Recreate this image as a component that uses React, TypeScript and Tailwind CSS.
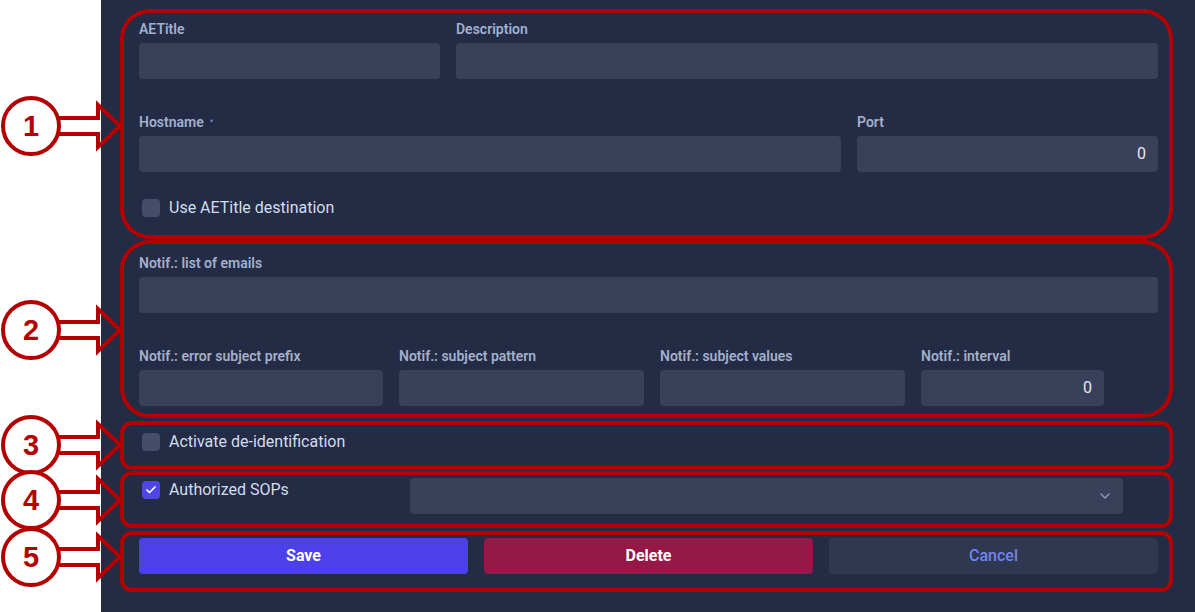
import React from "react";
import { ChevronDown, Check } from "lucide-react";

const RED = "#b40000";

function Label({ children, required }: { children: React.ReactNode; required?: boolean }) {
  return (
    <div className="h-5 mb-1 text-sm leading-5 font-semibold text-[#a3b0cb]">
      {children}
      {required && <span className="ml-1.5 text-[10px] align-top text-[#6f85ef]">•</span>}
    </div>
  );
}

function Input({ value, className = "" }: { value?: string; className?: string }) {
  return (
    <div
      className={`h-9 rounded bg-[#394059] flex items-center justify-end px-3 text-base text-[#e2e9f6] ${className}`}
    >
      {value}
    </div>
  );
}

function Checkbox({ checked, label }: { checked?: boolean; label: string }) {
  return (
    <div className="flex items-center h-[18px] gap-[9px] pl-[3px]">
      <div
        className={`w-[18px] h-[18px] rounded flex items-center justify-center ${
          checked ? "bg-[#4f46e5]" : "bg-[#454d69]"
        }`}
      >
        {checked && <Check size={12} strokeWidth={3.5} color="#fff" />}
      </div>
      <span className="text-base leading-[18px] text-[#d4ddec]">{label}</span>
    </div>
  );
}

const marks = [
  { n: "1", cy: 126 },
  { n: "2", cy: 330 },
  { n: "3", cy: 445 },
  { n: "4", cy: 500 },
  { n: "5", cy: 557 },
];

function Annotations() {
  return (
    <svg className="absolute inset-0 pointer-events-none" width="1195" height="612">
      <g fill="none" stroke={RED} strokeWidth="4">
        <rect x="122" y="11" width="1049" height="226" rx="28" />
        <rect x="122" y="242" width="1049" height="174" rx="28" />
        <rect x="122" y="423" width="1049" height="45" rx="10" />
        <rect x="122" y="473" width="1049" height="53" rx="10" />
        <rect x="122" y="533" width="1049" height="57" rx="10" />
      </g>
      {marks.map((m) => (
        <g key={m.n}>
          <path
            d={`M59 ${m.cy - 8} L98 ${m.cy - 8} L98 ${m.cy - 21} L120 ${m.cy} L98 ${m.cy + 21} L98 ${m.cy + 8} L59 ${m.cy + 8}`}
            fill="none"
            stroke={RED}
            strokeWidth="4"
          />
          <circle cx="31" cy={m.cy} r="28" fill="#fff" stroke={RED} strokeWidth="4" />
          <text
            x="31"
            y={m.cy + 10}
            textAnchor="middle"
            fill={RED}
            fontSize="29"
            fontWeight="bold"
            fontFamily="'Liberation Sans', Arial, sans-serif"
          >
            {m.n}
          </text>
        </g>
      ))}
    </svg>
  );
}

export default function App() {
  return (
    <div className="relative flex w-[1195px] h-[612px] overflow-hidden font-['Roboto',sans-serif]">
      <div className="w-[101px] bg-white" />
      <div className="flex-1 bg-[#232b45] pl-[38px] pr-[37px] pt-[19px]">
        <div className="grid grid-cols-[301px_1fr] gap-4">
          <div>
            <Label>AETitle</Label>
            <Input />
          </div>
          <div>
            <Label>Description</Label>
            <Input />
          </div>
        </div>

        <div className="grid grid-cols-[1fr_301px] gap-4 mt-[33px]">
          <div>
            <Label required>Hostname</Label>
            <Input />
          </div>
          <div>
            <Label>Port</Label>
            <Input value="0" />
          </div>
        </div>

        <div className="mt-[27px]">
          <Checkbox label="Use AETitle destination" />
        </div>

        <div className="mt-[36px]">
          <Label>Notif.: list of emails</Label>
          <Input />
        </div>

        <div className="grid grid-cols-[244px_245px_245px_1fr] gap-4 mt-[33px]">
          <div>
            <Label>Notif.: error subject prefix</Label>
            <Input />
          </div>
          <div>
            <Label>Notif.: subject pattern</Label>
            <Input />
          </div>
          <div>
            <Label>Notif.: subject values</Label>
            <Input />
          </div>
          <div>
            <Label>Notif.: interval</Label>
            <Input value="0" className="w-[183px]" />
          </div>
        </div>

        <div className="mt-[27px]">
          <Checkbox label="Activate de-identification" />
        </div>

        <div className="flex mt-[27px]">
          <div className="w-[271px] pt-[3px]">
            <Checkbox checked label="Authorized SOPs" />
          </div>
          <div className="w-[713px] h-9 rounded bg-[#394059] flex items-center justify-end pr-[10px]">
            <ChevronDown size={16} strokeWidth={2} color="#8d9ab8" />
          </div>
        </div>

        <div className="grid grid-cols-3 gap-4 mt-6">
          <button className="h-9 rounded bg-[#4c40ea] text-white text-base font-bold">Save</button>
          <button className="h-9 rounded bg-[#951846] text-white text-base font-bold">Delete</button>
          <button className="h-9 rounded bg-[#2f3751] text-[#6f85ef] text-base font-medium">Cancel</button>
        </div>
      </div>
      <Annotations />
    </div>
  );
}
